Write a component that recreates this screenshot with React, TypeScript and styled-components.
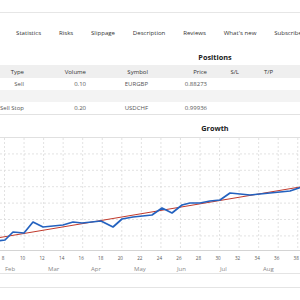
import React from "react";
import styled, { createGlobalStyle } from "styled-components";

const Global = createGlobalStyle`
  html, body { margin: 0; padding: 0; background: #fff; overflow: hidden; }
  body { font-family: "Open Sans", "Liberation Sans", sans-serif; color: #333; }
`;

const Viewport = styled.div`
  width: 300px;
  height: 300px;
  overflow: hidden;
`;

const Page = styled.div`
  width: 430px;
  display: flex;
  flex-direction: column;
`;

const TopBar = styled.div`
  height: 12px;
  border-bottom: 1px solid #e6e6e6;
`;

const Tabs = styled.nav`
  height: 38px;
  display: flex;
  align-items: center;
  padding-left: 7.2px;
`;

const Tab = styled.span`
  font-size: 6.1px;
  color: #333;
  padding: 0 8.9px;
  white-space: nowrap;
`;

const SectionTitle = styled.h2<{ $mt: number }>`
  margin: ${(p) => p.$mt}px 0 0;
  font-size: 7.3px;
  line-height: 12px;
  height: 12px;
  font-weight: 700;
  color: #222;
  text-align: center;
`;

const Table = styled.div`
  margin-top: 2px;
  display: flex;
  flex-direction: column;
  border-bottom: 1px solid #e2e2e2;
`;

const Row = styled.div<{ $bg?: string; $h: number }>`
  display: grid;
  grid-template-columns: 24px 62px 62px 59px 32px 34px 1fr;
  height: ${(p) => p.$h}px;
  align-items: center;
  background: ${(p) => p.$bg || "#fff"};
`;

const Cell = styled.span<{ $head?: boolean }>`
  font-size: 6px;
  text-align: right;
  white-space: nowrap;
  color: ${(p) => (p.$head ? "#333" : "#555")};
`;

const Chart = styled.svg`
  display: block;
  margin-top: 3px;
`;

const Navigator = styled.div`
  height: 13px;
  border-top: 1px solid #e4e4e4;
  border-bottom: 1px solid #e4e4e4;
`;

const tabs = ["Statistics", "Risks", "Slippage", "Description", "Reviews", "What's new", "Subscribers"];

const cols = ["Type", "Volume", "Symbol", "Price", "S/L", "T/P", ""];
const rows: (string[] | null)[] = [
  ["Sell", "0.10", "EURGBP", "0.88273", "", "", ""],
  null,
  ["Sell Stop", "0.20", "USDCHF", "0.99936", "", "", ""],
];

const blue: [number, number][] = [
  [-2, 241], [5, 240], [13, 232], [24, 233], [33, 222], [43, 227], [63, 225], [73, 222],
  [82, 223], [101, 221], [113, 227], [122, 219], [133, 217], [152, 215], [162, 208],
  [172, 213], [182, 205], [190, 203], [200, 203], [210, 201], [220, 200], [230, 193],
  [250, 195], [260, 194], [280, 192], [290, 191], [302, 187],
];

const TOP = 137;
const ticks = Array.from({ length: 16 }, (_, i) => ({ x: 4 + 19.55 * i, label: String(8 + 2 * i) }));
const months = ["Feb", "Mar", "Apr", "May", "Jun", "Jul", "Aug"];

function GrowthChart() {
  const pts = blue.map(([x, y]) => `${x},${y - TOP}`).join(" ");
  return (
    <Chart width={300} height={136} viewBox="0 0 300 136">
      <line x1={0} x2={300} y1={0.5} y2={0.5} stroke="#e0e0e0" strokeWidth={1} />
      {[1, 2, 3, 4, 5, 6].map((k) => (
        <line key={k} x1={0} x2={300} y1={16.4 * k + 0.5} y2={16.4 * k + 0.5} stroke="#dadada" strokeWidth={0.8} strokeDasharray="2 2" />
      ))}
      {ticks.map((t) => (
        <line key={t.label} x1={t.x + 0.5} x2={t.x + 0.5} y1={1} y2={113} stroke="#dadada" strokeWidth={0.8} strokeDasharray="2 2" />
      ))}
      <line x1={0} x2={300} y1={113.5} y2={113.5} stroke="#d4d4d4" strokeWidth={1} />
      <line x1={0} y1={237.5 - TOP} x2={300} y2={187 - TOP} stroke="#c0392b" strokeWidth={1} />
      <polyline points={pts} fill="none" stroke="#2462bf" strokeWidth={1.7} strokeLinejoin="round" />
      {ticks.map((t) => (
        <text key={t.label} x={t.x - 1} y={123} fontSize={4.6} fill="#555" textAnchor="middle" fontFamily="Open Sans, sans-serif">
          {t.label}
        </text>
      ))}
      {months.map((m, i) => (
        <text key={m} x={5 + 43 * i} y={134} fontSize={6} fill="#888" fontFamily="Open Sans, sans-serif">
          {m}
        </text>
      ))}
    </Chart>
  );
}

export default function App() {
  return (
    <Viewport>
      <Global />
      <Page>
        <TopBar />
        <Tabs>
          {tabs.map((t) => (
            <Tab key={t}>{t}</Tab>
          ))}
        </Tabs>
        <SectionTitle $mt={0}>Positions</SectionTitle>
        <Table>
          <Row $h={13} $bg="#efefef">
            {cols.map((c, i) => (
              <Cell key={i} $head>{c}</Cell>
            ))}
          </Row>
          {rows.map((r, i) =>
            r ? (
              <Row key={i} $h={12}>
                {r.map((c, j) => (
                  <Cell key={j}>{c}</Cell>
                ))}
              </Row>
            ) : (
              <Row key={i} $h={12} $bg="#f3f3f3" />
            )
          )}
        </Table>
        <SectionTitle $mt={7}>Growth</SectionTitle>
        <GrowthChart />
        <Navigator />
      </Page>
    </Viewport>
  );
}
